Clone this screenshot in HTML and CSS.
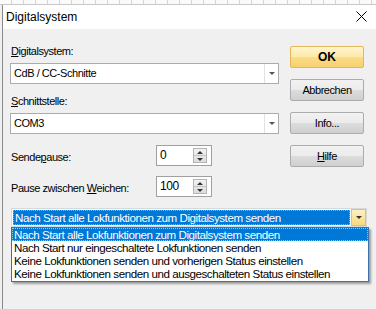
FILE: index.html
```html
<!DOCTYPE html>
<html lang="de">
<head>
  <meta charset="UTF-8">
  <title>Digitalsystem</title>
  <link rel="stylesheet" href="styles.css">
</head>
<body>
  <div class="desk"></div>
  <div class="window">
    <div class="titlebar">
      <span class="title">Digitalsystem</span>
      <svg class="close" width="11" height="11" viewBox="0 0 11 11">
        <path d="M0.5 0.5L10.5 10.5M10.5 0.5L0.5 10.5" stroke="#000" stroke-width="1" fill="none"/>
      </svg>
    </div>
    <div class="client">
      <div class="main">
        <div class="fields">
          <div class="field-label"><u>D</u>igitalsystem:</div>
          <div class="combo">
            <span class="combo-text">CdB / CC-Schnitte</span>
            <span class="combo-arrow"><i class="tri"></i></span>
          </div>
          <div class="field-label"><u>S</u>chnittstelle:</div>
          <div class="combo">
            <span class="combo-text">COM3</span>
            <span class="combo-arrow"><i class="tri"></i></span>
          </div>
          <div class="spin-row first">
            <span class="spin-label">Sende<u>p</u>ause:</span>
            <div class="spin">
              <span class="spin-value">0</span>
              <span class="spin-btns"><span class="spin-up"><i class="tri-up"></i></span><span class="spin-down"><i class="tri"></i></span></span>
            </div>
          </div>
          <div class="spin-row">
            <span class="spin-label">Pause zwischen <u>W</u>eichen:</span>
            <div class="spin">
              <span class="spin-value">100</span>
              <span class="spin-btns"><span class="spin-up"><i class="tri-up"></i></span><span class="spin-down"><i class="tri"></i></span></span>
            </div>
          </div>
        </div>
        <div class="buttons">
          <button class="btn btn-ok">OK</button>
          <button class="btn">Abbrechen</button>
          <button class="btn">Info...</button>
          <button class="btn"><u>H</u>ilfe</button>
        </div>
      </div>

      <div class="send-combo">
        <div class="combo combo-open">
          <span class="combo-text"><span class="focus">Nach Start alle Lokfunktionen zum Digitalsystem senden</span></span>
          <span class="combo-arrow"><i class="tri"></i></span>
        </div>
        <ul class="dropdown">
          <li class="selected">Nach Start alle Lokfunktionen zum Digitalsystem senden</li>
          <li>Nach Start nur eingeschaltete Lokfunktionen senden</li>
          <li>Keine Lokfunktionen senden und vorherigen Status einstellen</li>
          <li>Keine Lokfunktionen senden und ausgeschalteten Status einstellen</li>
        </ul>
      </div>
    </div>
  </div>
</body>
</html>
```

FILE: styles.css
```css
body {
  margin: 0;
  padding: 0;
  width: 376px;
  height: 309px;
  overflow: hidden;
  background-color: #f0f0f0;
  font-family: "Liberation Sans", Arial, sans-serif;
  font-size: 11px;
  letter-spacing: -0.45px;
  color: #000;
}

.desk {
  height: 4px;
  background-color: #fafafa;
  background-image: repeating-linear-gradient(90deg, transparent 0, transparent 11px, #d6d6d6 11px, #d6d6d6 12px);
  border-bottom: 1px solid #c8c8c8;
}

.window {
  margin-left: 2px;
  border-left: 1px solid #8a8a8a;
  height: 304px;
  background-color: #f0f0f0;
}

.titlebar {
  height: 24px;
  background-color: #fff;
  display: flex;
  align-items: center;
  justify-content: space-between;
  padding: 0 9px 0 3px;
}

.title {
  font-size: 12px;
  letter-spacing: 0;
}

.close {
  margin-top: -1px;
}

.client {
  padding: 16px 0 0 7px;
}

.main {
  display: flex;
}

.fields {
  width: 269px;
}

.field-label {
  height: 13px;
  line-height: 13px;
  margin-bottom: 5px;
  padding-left: 1px;
}

.combo {
  display: flex;
  height: 19px;
  border: 1px solid #acacac;
  background-color: #fff;
  margin-bottom: 11px;
}

.combo-text {
  flex: 1;
  line-height: 19px;
  padding-left: 3px;
  white-space: nowrap;
}

.combo-arrow {
  width: 13px;
  border-left: 1px solid #e3e3e3;
  display: flex;
  align-items: center;
  justify-content: center;
}

.tri {
  width: 0;
  height: 0;
  border-left: 3px solid transparent;
  border-right: 3px solid transparent;
  border-top: 3px solid #555;
}

.tri-up {
  width: 0;
  height: 0;
  border-left: 3px solid transparent;
  border-right: 3px solid transparent;
  border-bottom: 3px solid #333;
}

.spin-row {
  display: flex;
  align-items: center;
  margin-bottom: 10px;
}

.spin-row.first {
  margin-top: 1px;
}

.spin-label {
  width: 145px;
  padding-left: 1px;
  padding-top: 3px;
}

.spin {
  display: flex;
  width: 54px;
  height: 19px;
  border: 1px solid #a0a0a0;
  background-color: #fff;
}

.spin-value {
  flex: 1;
  line-height: 19px;
  padding-left: 3px;
  font-size: 12px;
}

.spin-btns {
  display: flex;
  flex-direction: column;
  width: 12px;
  margin: 2px 4px 2px 0;
  border: 1px solid #b4b4b4;
  background: linear-gradient(#f2f2f2, #dcdcdc);
}

.spin-up,
.spin-down {
  flex: 1;
  display: flex;
  align-items: center;
  justify-content: center;
}

.spin-up {
  border-bottom: 1px solid #c4c4c4;
}

.spin-down .tri {
  border-top-color: #333;
}

.buttons {
  display: flex;
  flex-direction: column;
  gap: 11px;
  margin-left: 11px;
  padding-top: 1px;
}

.btn {
  width: 74px;
  height: 22px;
  padding: 0;
  border: 1px solid #acacac;
  border-radius: 2px;
  background: linear-gradient(#f2f2f2 0%, #ebebeb 50%, #dddddd 51%, #cfcfcf 100%);
  font-family: "Liberation Sans", Arial, sans-serif;
  font-size: 11px;
  letter-spacing: -0.45px;
  color: #000;
}

.btn-ok {
  border-color: #e2b85c;
  background: linear-gradient(#fff4cc 0%, #fde9a8 50%, #fbdc86 51%, #f7d070 100%);
  font-weight: bold;
  font-size: 12px;
  letter-spacing: 0;
}

.send-combo {
  position: relative;
  width: 356px;
  margin-top: 1px;
  margin-left: 1px;
}

.combo-open {
  height: 17px;
  border-color: #d8d8d8;
  margin-bottom: 0;
}

.combo-open .combo-text {
  padding: 1px;
  line-height: 15px;
  display: flex;
}

.focus {
  flex: 1;
  background-color: #0078d7;
  color: #fff;
  padding-left: 2px;
  font-size: 11.6px;
  outline: 1px dotted #9ab;
  outline-offset: -1px;
}

.combo-open .combo-arrow {
  width: 13px;
  border: 1px solid #e5c365;
  background: linear-gradient(#fdf0c2, #f8d97c);
}

.combo-open .combo-arrow .tri {
  border-top-color: #333;
}

.dropdown {
  position: absolute;
  top: 19px;
  left: 0;
  width: 356px;
  margin: 0;
  padding: 0 0 1px;
  list-style: none;
  background-color: #fff;
  border: 1px solid #3d6fa8;
  box-shadow: 2px 2px 2px rgba(0, 0, 0, 0.35);
}

.dropdown li {
  height: 13px;
  line-height: 14px;
  padding-left: 2px;
  white-space: nowrap;
  font-size: 11.6px;
}

.dropdown li.selected {
  background-color: #0078d7;
  color: #fff;
  outline: 1px dotted #9cc;
  outline-offset: -1px;
}
```
